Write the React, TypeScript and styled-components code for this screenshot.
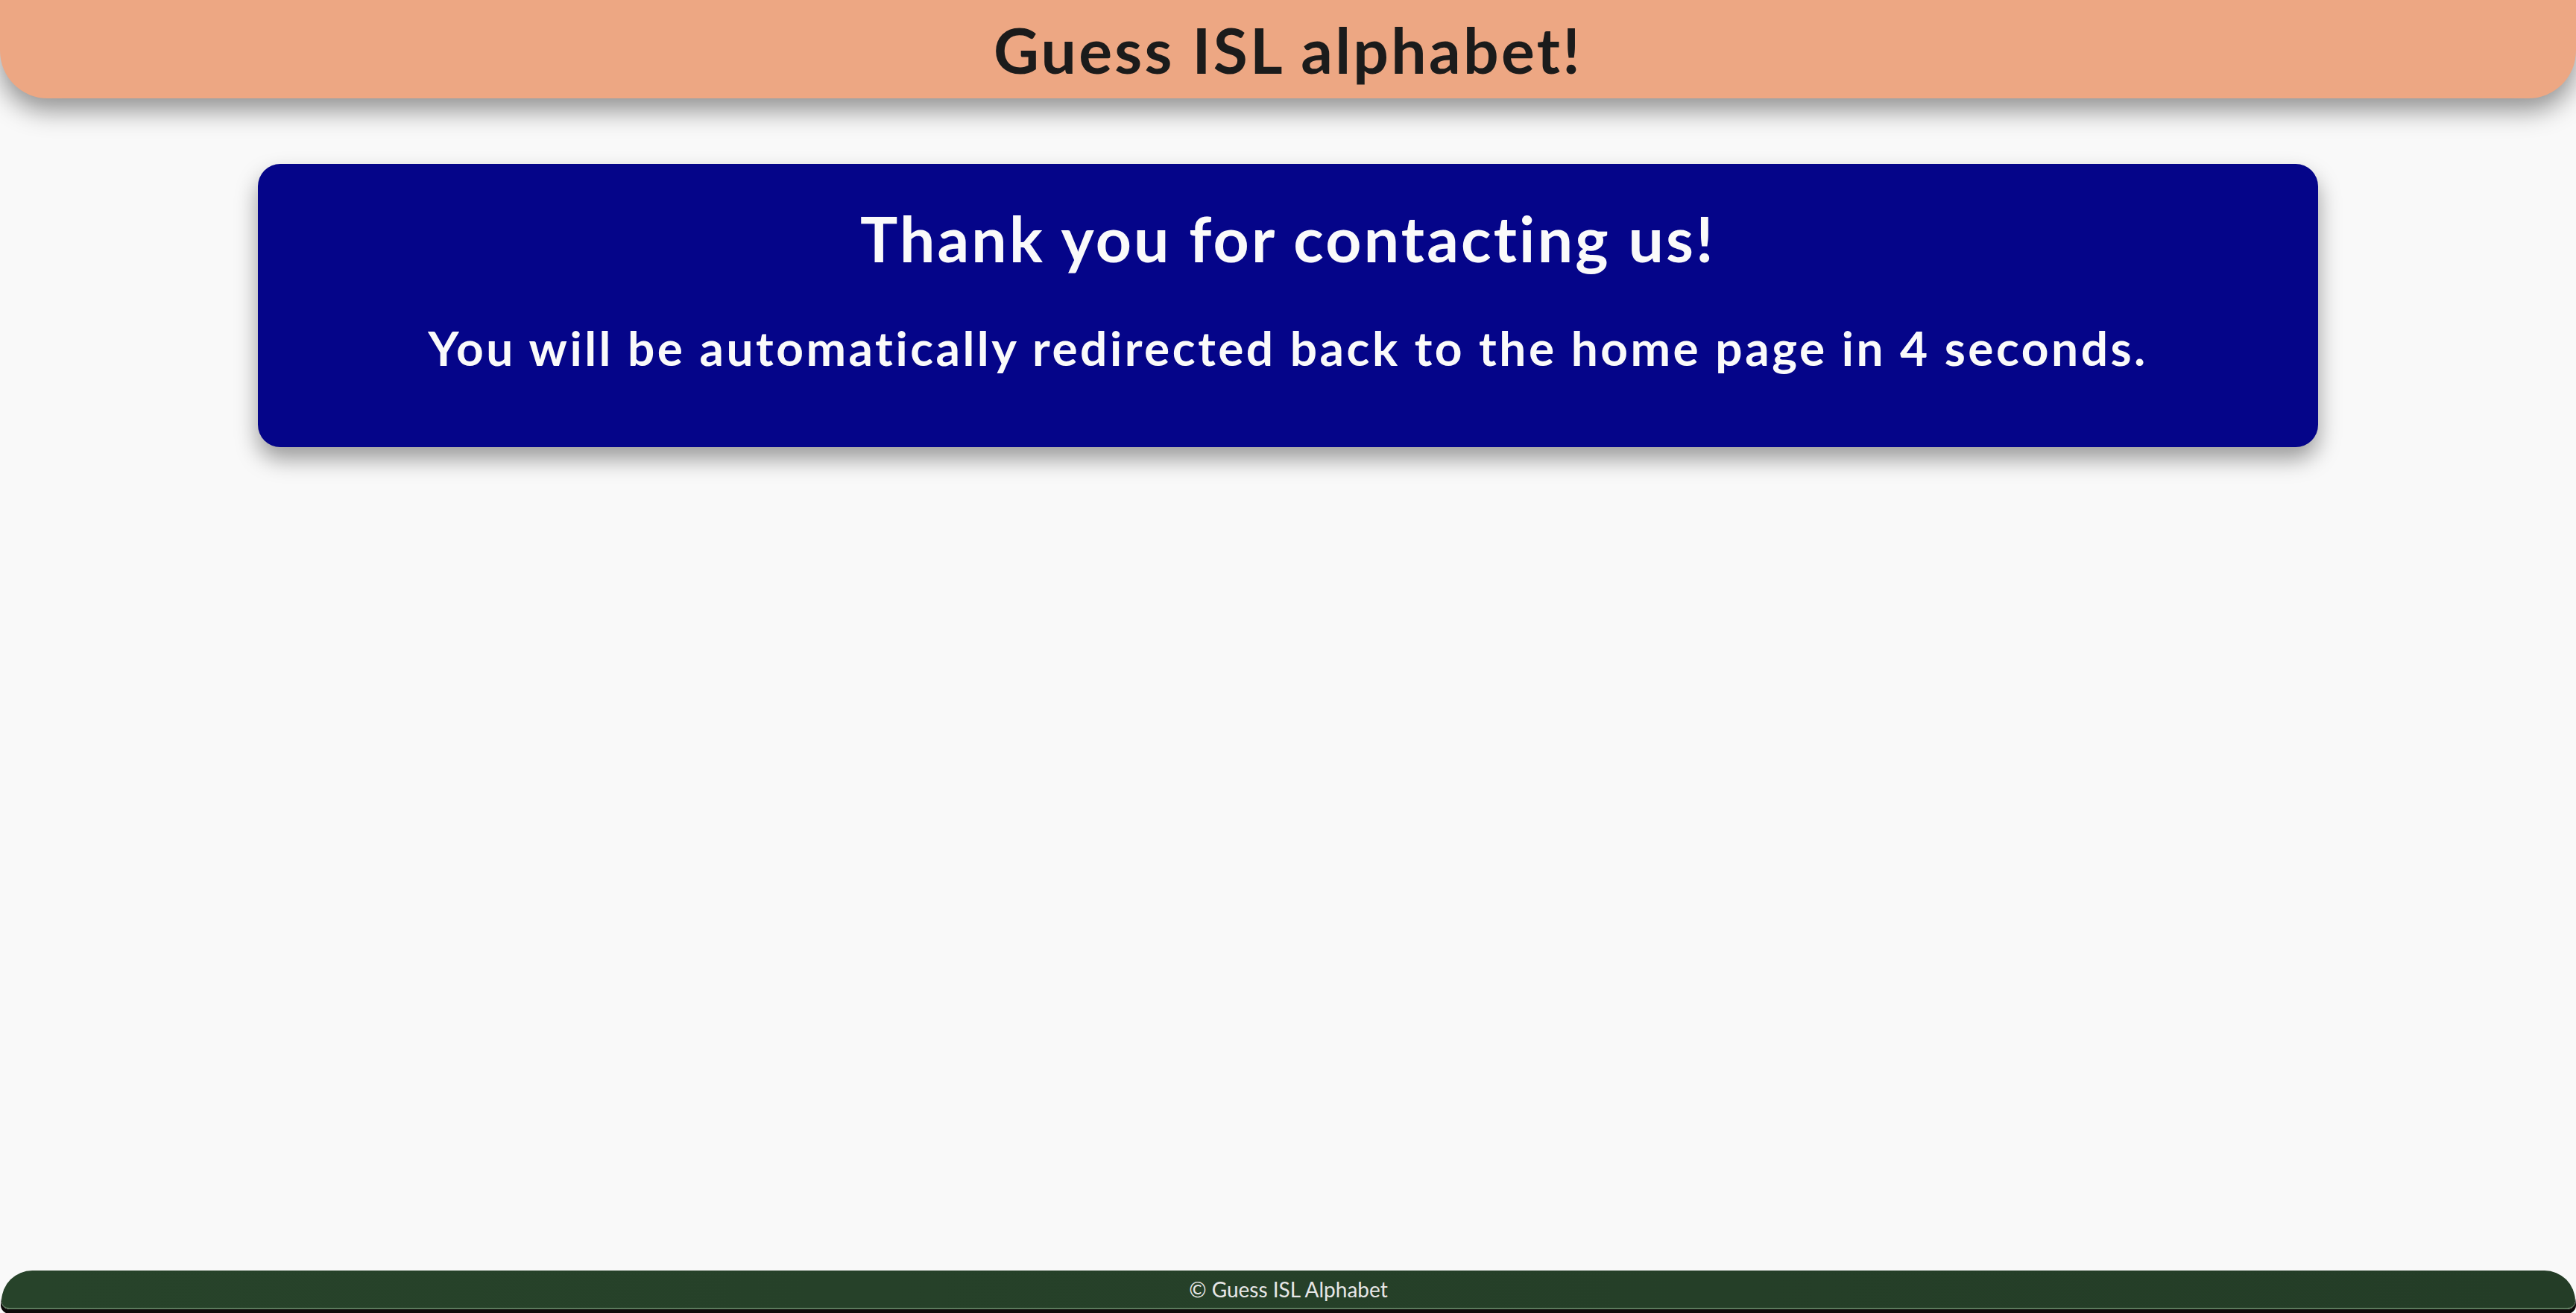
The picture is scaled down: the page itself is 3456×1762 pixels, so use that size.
import React from 'react';
import styled, { createGlobalStyle } from 'styled-components';

const GlobalStyle = createGlobalStyle`
  html, body {
    margin: 0;
    padding: 0;
    background: #f9f9f9;
    font-family: Lato, "Open Sans", "Noto Sans", sans-serif;
  }

  * {
    box-sizing: border-box;
  }
`;

const Page = styled.div`
  min-height: 100vh;
  display: flex;
  flex-direction: column;
  background: #f9f9f9;
`;

const Header = styled.header`
  height: 132px;
  display: flex;
  align-items: center;
  justify-content: center;
  background: #eda783;
  border-radius: 0 0 64px 64px;
  box-shadow: 0 16px 34px rgba(0, 0, 0, 0.42);
  position: relative;
  z-index: 1;
`;

const Title = styled.h1`
  margin: 0;
  font-size: 84px;
  font-weight: 700;
  letter-spacing: 3.3px;
  color: #1b1b1b;
`;

const Main = styled.main`
  flex: 1;
  padding-top: 88px;
`;

const Card = styled.section`
  width: 80%;
  margin: 0 auto;
  padding: 49px 40px 95px;
  background: #050589;
  border-radius: 30px;
  box-shadow: 0 16px 30px rgba(0, 0, 0, 0.38);
  text-align: center;
  color: #fafafa;
`;

const Heading = styled.h1`
  margin: 0 0 58px;
  font-size: 84px;
  font-weight: 700;
  letter-spacing: 3.2px;
`;

const Message = styled.h2`
  margin: 0;
  font-size: 64px;
  font-weight: 700;
  letter-spacing: 3.5px;
`;

const Footer = styled.footer`
  height: 52px;
  margin: 0 1px 5px 2px;
  display: flex;
  align-items: center;
  justify-content: center;
  background: linear-gradient(100deg, #27432a, #243d27);
  border-bottom: 2px solid #5b7a5c;
  border-radius: 46px 46px 12px 12px;
  box-shadow: 0 5px 0 1px #0d0a09;
  color: #e6e6e6;
  font-size: 28px;
`;

const App: React.FC = () => {
  return (
    <>
      <GlobalStyle />
      <Page>
        <Header>
          <Title>Guess ISL alphabet!</Title>
        </Header>

        <Main>
          <Card>
            <Heading>Thank you for contacting us!</Heading>
            <Message>You will be automatically redirected back to the home page in 4 seconds.</Message>
          </Card>
        </Main>

        <Footer>© Guess ISL Alphabet</Footer>
      </Page>
    </>
  );
};

export default App;
